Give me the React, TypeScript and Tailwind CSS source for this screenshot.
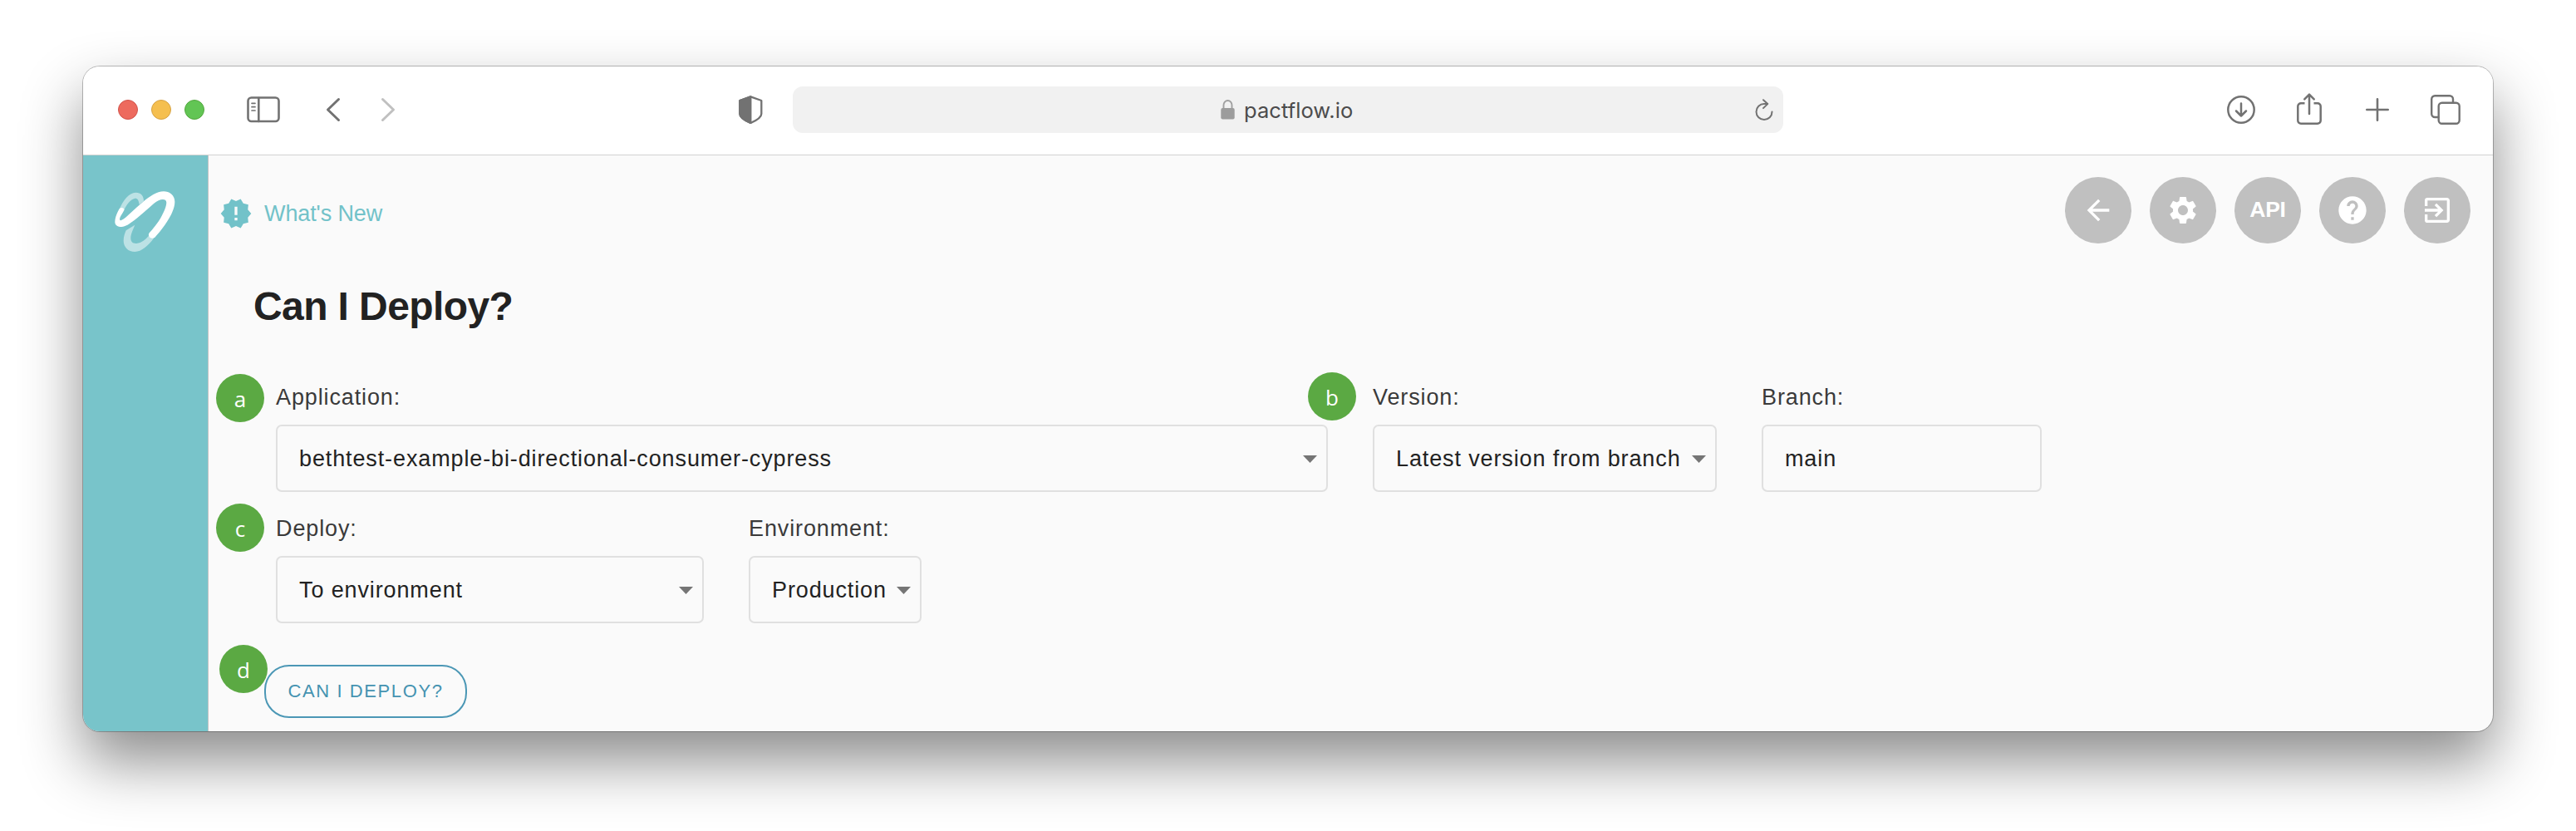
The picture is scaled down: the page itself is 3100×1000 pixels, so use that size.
import React from "react";
import { MdArrowBack, MdSettings, MdHelp, MdExitToApp, MdNewReleases } from "react-icons/md";

const stroke = {
  fill: "none",
  stroke: "currentColor",
  strokeWidth: 2.6,
  strokeLinecap: "round" as const,
  strokeLinejoin: "round" as const,
};

function Logo() {
  return (
    <svg className="ml-[37px] mt-[42px] size-[75px]" viewBox="170 510 225 225" fill="#fff">
      <path
        opacity=".5"
        d="M189 580C204 545 225 519 249 518C268 518 278 530 278 549L262 562C260 545 255 538 246 539C230 542 216 562 207 581ZM214 655L246 635C238 655 230 670 231 685C232 698 240 703 252 702C270 700 283 690 294 676L315 682C295 710 270 732 246 732C222 732 205 715 205 692C205 678 210 664 214 655Z"
      />
      <path d="M318 680C350 645 390 590 390 552C390 527 370 514 350 514C325 514 300 532 276 551C255 568 235 588 215 606C200 619 192 622 191 614C191 606 200 596 207 582C210 574 196 568 189 578C180 594 174 610 174 624C174 636 184 642 198 642C212 641 225 632 245 617C270 598 300 570 315 557C330 545 346 539 356 545C366 553 355 580 343 602C330 628 310 650 298 664C290 676 303 690 318 680Z" />
    </svg>
  );
}

function Badge({ letter, className }: { letter: string; className: string }) {
  return (
    <span
      className={
        "absolute flex size-[58px] items-center justify-center rounded-full bg-[#5ba943] pt-[2px] font-['Open_Sans',sans-serif] text-[26px] leading-none text-white " +
        className
      }
    >
      {letter}
    </span>
  );
}

function Field({
  label,
  value,
  width,
  arrow = true,
  badge,
}: {
  label: string;
  value: string;
  width: string;
  arrow?: boolean;
  badge?: React.ReactNode;
}) {
  return (
    <div className={"relative " + width}>
      {badge}
      <div className="h-[53px] whitespace-nowrap text-[27px] leading-[41px] tracking-[0.88px] text-[#3a3a3a]">{label}</div>
      <div className="flex h-[81px] items-center justify-between rounded-[7px] border-2 border-[#e0e0e0] pl-[26px] pr-[11px] text-[27px] leading-none tracking-[0.88px] text-[#222]">
        <span className="whitespace-nowrap pt-[2px]">{value}</span>
        {arrow && (
          <svg className="mt-px h-[9px] w-[17px] shrink-0" viewBox="0 0 17 9">
            <path d="M0 0h17L8.500 9z" fill="#757575" />
          </svg>
        )}
      </div>
    </div>
  );
}

function RoundButton({ children }: { children: React.ReactNode }) {
  return (
    <button className="flex size-[80px] items-center justify-center rounded-full bg-[#c0c0c0] text-[26.500px] font-bold tracking-[-0.3px] text-white">
      {children}
    </button>
  );
}

function Toolbar() {
  return (
    <header className="flex h-[107px] items-center border-b border-[#d2d2d2] bg-white pb-[2px] pl-[42px] pr-[39px] text-[#727272]">
      <div className="flex gap-4">
        <span className="size-6 rounded-full border border-[#d1534b] bg-[#ed6a5e]" />
        <span className="size-6 rounded-full border border-[#d6a243] bg-[#f5bf4f]" />
        <span className="size-6 rounded-full border border-[#53a73f] bg-[#62c554]" />
      </div>
      <svg className="ml-[51px] h-8 w-10" viewBox="0 0 40 32" {...stroke}>
        <rect x="1.500" y="1.500" width="37" height="28.500" rx="4" />
        <path d="M14.300 2v28" />
        <path d="M6 8.300h4M6 12.700h4M6 17h4" strokeWidth="1.700" />
      </svg>
      <svg className="ml-[54px] h-8 w-5" viewBox="0 0 20 32" {...stroke} strokeWidth={3}>
        <path d="M16.500 3.500L3.500 16l13 12.500" />
      </svg>
      <svg className="ml-[46px] h-8 w-5 text-[#c0c0c0]" viewBox="0 0 20 32" {...stroke} strokeWidth={3}>
        <path d="M3.500 3.500L16.500 16l-13 12.500" />
      </svg>
      <svg className="ml-[412px] h-[34px] w-[29px]" viewBox="0 0 29 34" {...stroke} strokeWidth={2.3}>
        <path d="M14.300 1.300L27.300 6v16c0 4-6 8-13 11C7 30 1.300 26 1.300 22V6z" />
        <path d="M14.300 1.300L1.300 6v16c0 4 6 8 13 11z" fill="currentColor" />
      </svg>
      <div className="ml-[36px] flex h-[56px] w-[1192px] items-center rounded-[12px] bg-[#f1f1f1]">
        <svg className="ml-[515px] h-6 w-[17px]" viewBox="0 0 17 24">
          <path d="M3.500 11V6.500a5 5.500 0 0110 0V11" fill="none" stroke="#a0a0a0" strokeWidth="1.900" />
          <rect x="0.300" y="10" width="16.400" height="13.500" rx="2" fill="#9c9c9c" />
        </svg>
        <span className="ml-[11px] pt-px font-[Inter] text-[25.500px] leading-none tracking-[0.05px] text-[#4c4c4c]">pactflow.io</span>
        <svg className="ml-auto mr-[12px] h-[26px] w-[22px]" viewBox="0 0 22 26" {...stroke} strokeWidth={2}>
          <path d="M20.500 15.500a9.500 9.500 0 11-9.500-9.500h4" />
          <path d="M10 1.200l5.200 4.900-5.200 5" />
        </svg>
      </div>
      <svg className="ml-auto size-[34px]" viewBox="0 0 34 34" {...stroke} strokeWidth={2.5}>
        <circle cx="17" cy="17" r="15.700" />
        <path d="M17 9.500v15M11 18.500l6 6 6-6" />
      </svg>
      <svg className="-mt-[2px] ml-[50px] h-[38px] w-[30px]" viewBox="0 0 30 38" {...stroke} strokeWidth={2.5}>
        <path
          d="M9.500 12.300H5a3.700 3.700 0 00-3.700 3.700v17A3.700 3.700 0 005 36.700h20a3.700 3.700 0 003.700-3.700V16a3.700 3.700 0 00-3.700-3.700h-4.500"
          strokeLinecap="butt"
        />
        <path d="M15 25V2M9.300 7.300L15 1.600l5.700 5.700" />
      </svg>
      <svg className="ml-[53px] size-7" viewBox="0 0 28 28" {...stroke}>
        <path d="M14 1.300v25.400M1.300 14h25.400" />
      </svg>
      <svg className="ml-[50px] size-9" viewBox="0 0 36 36" {...stroke} strokeWidth={2.4}>
        <rect x="9.700" y="9.700" width="25" height="25" rx="4" />
        <path d="M9.500 27H5.200a4 4 0 01-4-4V5.200a4 4 0 014-4H23a4 4 0 014 4v4.300" />
      </svg>
    </header>
  );
}

export default function App() {
  return (
    <div className="h-[1000px] w-[3100px] overflow-hidden bg-white px-[100px] pt-[80px] font-['Liberation_Sans',Arial,sans-serif]">
      <div className="h-[800px] overflow-hidden rounded-[20px] bg-[#fafafa] shadow-[0_0_0_1px_rgba(0,0,0,0.25),0_36px_72px_rgba(0,0,0,0.46)]">
        <Toolbar />
        <div className="flex h-[693px]">
          <aside className="w-[151px] shrink-0 border-r border-[#c4c4c4] bg-[#78c4ca]">
            <Logo />
          </aside>
          <main className="flex-1">
            <div className="flex items-start justify-between pl-[13px] pr-[27px] pt-[26px]">
              <a className="mt-[24px] flex items-center text-[27px] leading-[40px] tracking-[-0.1px] text-[#72c2c9]">
                <MdNewReleases className="mr-[14px] size-[40px]" />
                What's New
              </a>
              <nav className="flex gap-[22px]">
                <RoundButton>
                  <MdArrowBack className="size-[40px]" />
                </RoundButton>
                <RoundButton>
                  <MdSettings className="size-[40px]" />
                </RoundButton>
                <RoundButton>API</RoundButton>
                <RoundButton>
                  <MdHelp className="size-[40px]" />
                </RoundButton>
                <RoundButton>
                  <MdExitToApp className="size-[40px]" />
                </RoundButton>
              </nav>
            </div>
            <h1 className="ml-[54px] mt-[46px] text-[48px] font-bold leading-[60px] tracking-[-0.6px] text-[#222]">Can I Deploy?</h1>
            <div className="ml-[81px] mt-[59px] flex gap-[54px]">
              <Field
                label="Application:"
                value="bethtest-example-bi-directional-consumer-cypress"
                width="w-[1266px]"
                badge={<Badge letter="a" className="-left-[72px] -top-[8px]" />}
              />
              <Field
                label="Version:"
                value="Latest version from branch"
                width="w-[414px]"
                badge={<Badge letter="b" className="-left-[78px] -top-[10px]" />}
              />
              <Field label="Branch:" value="main" width="w-[337px]" arrow={false} />
            </div>
            <div className="ml-[81px] mt-[24px] flex gap-[54px]">
              <Field
                label="Deploy:"
                value="To environment"
                width="w-[515px]"
                badge={<Badge letter="c" className="-left-[72px] -top-[10px]" />}
              />
              <Field label="Environment:" value="Production" width="w-[208px]" />
            </div>
            <div className="relative ml-[67px] mt-[50px] w-[244px]">
              <Badge letter="d" className="-left-[54px] -top-[24px]" />
              <button className="h-[64px] w-[244px] whitespace-nowrap rounded-[30px] border-2 border-[#4b97b5] text-[22px] leading-none tracking-[1.6px] text-[#4593b1]">
                CAN I DEPLOY?
              </button>
            </div>
          </main>
        </div>
      </div>
    </div>
  );
}
